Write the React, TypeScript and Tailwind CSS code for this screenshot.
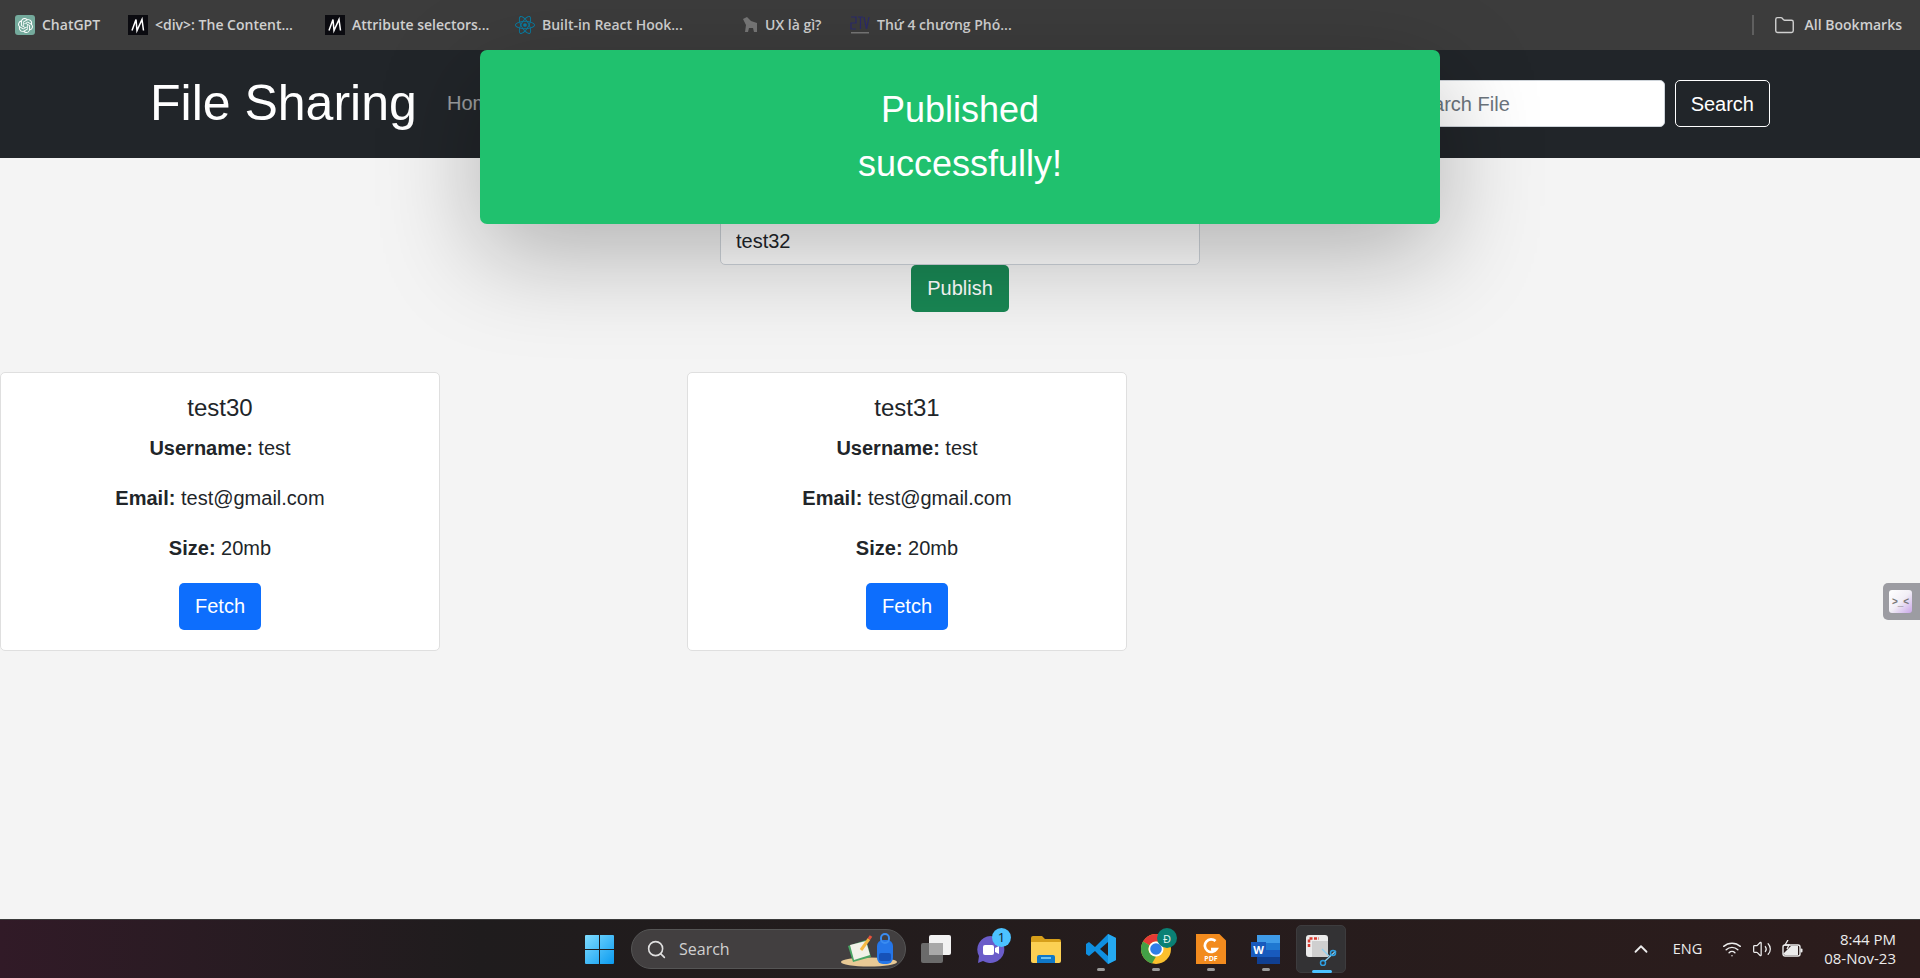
import { ChevronUp, Folder, Search, Volume2, Wifi } from 'lucide-react'
import { SiOpenai, SiReact } from 'react-icons/si'

function MdnIcon() {
  return (
    <svg viewBox="0 0 20 20" className="w-5 h-5 bg-[#0b0b10]">
      <path d="M4 15.5 L8 4.5 L9 15.5 L14 4.5 L15.5 15.5" stroke="#fff" strokeWidth="1.5" fill="none" />
    </svg>
  )
}

function Bookmark({ icon, label, width }: { icon: React.ReactNode; label: string; width: string }) {
  return (
    <div className={`flex items-center gap-[7px] ${width}`}>
      {icon}
      <span className="text-[14px] font-semibold text-[#d0d0d0] whitespace-nowrap pb-[2px]" style={{ fontFamily: '"Open Sans", sans-serif' }}>{label}</span>
    </div>
  )
}

function BookmarkBar() {
  return (
    <div className="h-[50px] bg-[#3c3c3c] flex items-center pl-[15px]">
      <Bookmark width="w-[113px]" label="ChatGPT" icon={<div className="w-5 h-5 rounded-[3px] bg-[#74aa9c] flex items-center justify-center"><SiOpenai className="text-white text-[15px]" /></div>} />
      <Bookmark width="w-[197px]" label="<div>: The Content..." icon={<MdnIcon />} />
      <Bookmark width="w-[190px]" label="Attribute selectors..." icon={<MdnIcon />} />
      <Bookmark width="w-[227px]" label="Built-in React Hook..." icon={<SiReact className="text-[#087ea4] text-[20px]" />} />
      <Bookmark width="w-[108px]" label="UX là gì?" icon={
        <svg viewBox="0 0 16 16" className="w-4 h-4">
          <path d="M1 2 L5 0 L9 4 L15 6 L15 15 L12 15 L11 11 L7 11 L6 15 L3 15 L4 8 Z" fill="#777" />
        </svg>
      } />
      <Bookmark width="w-[180px]" label="Thứ 4 chương Phó..." icon={
        <svg viewBox="0 0 20 20" className="w-5 h-5">
          <path d="M1 2 H6 V8 H1 V14 H6 M8 2 H13 M10.5 2 V14 M14 2 L16.5 14 L19 2" stroke="#2b2a6b" strokeWidth="1.2" fill="none" />
          <rect x="1" y="17" width="18" height="1.5" fill="#777" />
        </svg>
      } />
      <div className="ml-auto flex items-center pr-[18px]">
        <div className="w-[2px] h-[20px] bg-[#5f5f5f] mr-5"></div>
        <Folder size={21} strokeWidth={1.6} className="text-[#d0d0d0] mr-[10px]" />
        <span className="text-[14px] font-semibold text-[#d0d0d0] pb-[2px]" style={{ fontFamily: '"Open Sans", sans-serif' }}>All Bookmarks</span>
      </div>
    </div>
  )
}

function Navbar() {
  return (
    <nav className="h-[108px] bg-[#212529] flex items-start pt-[30px] pl-[150px] pr-[150px]">
      <span className="text-[50px] text-white leading-[47px] w-[297px]">File Sharing</span>
      <span className="text-[20px] leading-[47px] text-white/55">Home</span>
      <div className="ml-auto flex gap-[10px]">
        <input
          readOnly
          placeholder="Search File"
          className="w-[272px] h-[47px] rounded-[5px] border border-[#ced4da] bg-white px-[15px] pt-[2px] text-[20px] placeholder:text-[#6c757d]"
        />
        <button className="h-[47px] px-[15px] rounded-[5px] border border-white text-white text-[20px]">Search</button>
      </div>
    </nav>
  )
}

function FileCard({ name }: { name: string }) {
  return (
    <div className="w-[440px] h-[279px] bg-white border border-[#dfdfdf] rounded-[5px] pt-5 text-center text-[#212529]">
      <h4 className="text-[24px] leading-[29px] mb-[11px]">{name}</h4>
      <p className="text-[20px] leading-[30px] mb-5"><b>Username:</b> test</p>
      <p className="text-[20px] leading-[30px] mb-5"><b>Email:</b> test@gmail.com</p>
      <p className="text-[20px] leading-[30px] mb-5"><b>Size:</b> 20mb</p>
      <button className="h-[47px] px-[16px] pb-[2px] rounded-[5px] bg-[#0d6efd] text-white text-[20px]">Fetch</button>
    </div>
  )
}

function Taskbar() {
  return (
    <div className="h-[59px] bg-gradient-to-r from-[#311a27] via-[#1f1c1d] via-25% to-[#2c1c1c] border-t border-[#3a3a3a] flex items-center pl-[585px] shrink-0" style={{ fontFamily: '"Open Sans", sans-serif' }}>
      {/* Start */}
      <svg viewBox="0 0 29 29" className="w-[29px] h-[29px]">
        <defs>
          <linearGradient id="win" x1="0" y1="0" x2="1" y2="1">
            <stop offset="0" stopColor="#7fdcff" />
            <stop offset="1" stopColor="#0b9bf0" />
          </linearGradient>
        </defs>
        <path d="M1 0H14V14H0V1Q0 0 1 0ZM15 0H28Q29 0 29 1V14H15ZM0 15H14V29H1Q0 29 0 28ZM15 15H29V28Q29 29 28 29H15Z" fill="url(#win)" />
      </svg>

      {/* Search pill */}
      <div className="ml-[17px] w-[275px] h-[40px] rounded-full bg-[#423f40] border border-[#555] flex items-center pl-[14px] relative">
        <Search size={21} strokeWidth={1.8} className="text-[#e0e0e0]" />
        <span className="ml-[12px] text-[16px] text-[#d0d0d0]">Search</span>
        <svg viewBox="0 0 56 36" className="w-[56px] h-[36px] absolute right-[8px] top-[1px]">
          <ellipse cx="28" cy="31" rx="28" ry="4.5" fill="#e8c995" />
          <path d="M7 15 L25 9 L30 26 L12 31 Z" fill="#4aa564" />
          <path d="M9 14 L25 10 L29 24 L13 29 Z" fill="#f1f1e8" />
          <path d="M20 19 L28 8" stroke="#f5b942" strokeWidth="3" />
          <path d="M28 8 L30 5" stroke="#e8503a" strokeWidth="3" />
          <rect x="36" y="9" width="16" height="24" rx="6" fill="#2576e8" />
          <rect x="40" y="3" width="8" height="9" rx="4" fill="none" stroke="#3a8cf0" strokeWidth="2" />
          <rect x="38" y="22" width="12" height="8" rx="2" fill="#1652b8" />
        </svg>
      </div>

      {/* Task view */}
      <svg viewBox="0 0 30 28" className="w-[30px] h-[28px] ml-[15px]">
        <rect x="0" y="8" width="22" height="20" rx="2" fill="#6b6b6b" />
        <rect x="8" y="0" width="22" height="20" rx="2" fill="#f2f2f2" />
        <rect x="8" y="8" width="14" height="12" fill="#a9a9a9" />
      </svg>

      {/* Teams chat */}
      <div className="relative ml-[25px] w-[29px] h-[29px]">
        <svg viewBox="0 0 29 29" className="w-[29px] h-[29px]">
          <path d="M14.5 1 A14 13.5 0 1 1 7 26 L2 28 L3 21 A14 13.5 0 0 1 14.5 1Z" fill="#6a5cc9" />
          <rect x="7" y="10" width="11" height="10" rx="2" fill="#fff" />
          <path d="M19 13 L23 11 V19 L19 17 Z" fill="#fff" />
        </svg>
        <div className="absolute -top-[7px] -right-[6px] w-[19px] h-[19px] rounded-full bg-[#4cc2ff] text-[#10202c] text-[13px] flex items-center justify-center leading-none">1</div>
      </div>

      {/* Explorer */}
      <svg viewBox="0 0 30 27" className="w-[30px] h-[27px] ml-[26px]">
        <path d="M0 2 Q0 0 2 0 H11 L14 3 H28 Q30 3 30 5 V8 H0 Z" fill="#d79f1a" />
        <path d="M0 6 H30 V25 Q30 27 28 27 H2 Q0 27 0 25 Z" fill="#fcd053" />
        <path d="M6 21 Q6 19 8 19 H22 Q24 19 24 21 V27 H6 Z" fill="#0f78c9" />
        <rect x="10" y="21" width="10" height="2" fill="#6fc2ef" />
      </svg>

      {/* VS Code */}
      <div className="relative ml-[25px] w-[30px] h-[30px]">
        <svg viewBox="0 0 30 30" className="w-[30px] h-[30px]">
          <path d="M22 0 L30 4 V26 L22 30 L9 17 L3 22 L0 20 V10 L3 8 L9 13 Z M22 8 L14 15 L22 22 Z" fill="#0f8fe0" fillRule="evenodd" />
          <path d="M22 0 L30 4 V26 L22 30 Z" fill="#25a9f0" />
        </svg>
        <div className="absolute -bottom-[7px] left-[11px] w-[8px] h-[3px] rounded-full bg-[#9a9a9a]"></div>
      </div>

      {/* Chrome */}
      <div className="relative ml-[25px] w-[30px] h-[30px]">
        <svg viewBox="0 0 30 30" className="w-[30px] h-[30px]">
          <circle cx="15" cy="15" r="15" fill="#fbc02d" />
          <path d="M15 0 A15 15 0 0 1 28 7.5 H15 A7.5 7.5 0 0 0 8.5 11.2 L2 7.5 A15 15 0 0 1 15 0Z" fill="#e53935" />
          <path d="M2 7.5 L8.5 11.2 A7.5 7.5 0 0 0 15 22.5 L11 29.5 A15 15 0 0 1 2 7.5Z" fill="#43a047" />
          <circle cx="15" cy="15" r="7.5" fill="#fff" />
          <circle cx="15" cy="15" r="5.8" fill="#2f7ee8" />
        </svg>
        <div className="absolute -top-[6px] -right-[6px] w-[20px] h-[20px] rounded-full bg-[#0a8074] text-[#e6f5f2] text-[11px] flex items-center justify-center leading-none">Đ</div>
        <div className="absolute -bottom-[7px] left-[11px] w-[8px] h-[3px] rounded-full bg-[#9a9a9a]"></div>
      </div>

      {/* Foxit PDF */}
      <div className="relative ml-[25px] w-[30px] h-[30px] bg-[#f28b1e] flex flex-col items-center justify-end pb-[1px]" style={{ clipPath: 'polygon(0 0, 78% 0, 100% 22%, 100% 100%, 0 100%)' }}>
        <svg viewBox="0 0 20 18" className="w-[18px] h-[17px]">
          <path d="M15 3 A7 7 0 1 0 16 12 H10" stroke="#fff" strokeWidth="3" fill="none" />
        </svg>
        <span className="text-[7px] font-bold leading-[8px] text-white">PDF</span>
      </div>
      <div className="relative w-0 h-[30px]">
        <div className="absolute -bottom-[7px] -left-[19px] w-[8px] h-[3px] rounded-full bg-[#9a9a9a]"></div>
      </div>

      {/* Word */}
      <div className="relative ml-[25px] w-[29px] h-[29px]">
        <svg viewBox="0 0 29 29" className="w-[29px] h-[29px]">
          <rect x="6" y="0" width="23" height="8" fill="#3f9be8" />
          <rect x="6" y="8" width="23" height="7" fill="#1f78d1" />
          <rect x="6" y="15" width="23" height="7" fill="#185abd" />
          <rect x="6" y="22" width="23" height="7" fill="#103f91" />
        </svg>
        <div className="absolute left-0 top-[7px] w-[15px] h-[15px] bg-[#185abd] text-white text-[11px] font-bold flex items-center justify-center leading-none">W</div>
        <div className="absolute -bottom-[7px] left-[11px] w-[8px] h-[3px] rounded-full bg-[#9a9a9a]"></div>
      </div>

      {/* Snipping tool, active */}
      <div className="relative ml-[16px] w-[50px] h-[48px] rounded-[5px] bg-[#333234] border border-[#3d3c3e] flex items-start justify-start pt-[9px] pl-[9px]">
        <svg viewBox="0 0 31 31" className="w-[31px] h-[31px]">
          <rect x="0" y="0" width="22" height="22" rx="3" fill="#ececec" />
          <rect x="6" y="6" width="16" height="16" fill="#cfcfcf" />
          <path d="M3 12 V3.5 H13" stroke="#d63a2f" strokeWidth="2.5" strokeDasharray="3 1.5" fill="none" />
          <path d="M16 14 L24 22 M30 16 L19 26" stroke="#8fd0f0" strokeWidth="1.3" />
          <circle cx="27" cy="18" r="2.5" fill="none" stroke="#2f9fe0" strokeWidth="1.5" />
          <circle cx="17" cy="28" r="2.5" fill="none" stroke="#2f9fe0" strokeWidth="1.5" />
        </svg>
        <div className="absolute bottom-[-1px] left-[15px] w-[20px] h-[3px] rounded-full bg-[#4cc2ff]"></div>
      </div>

      {/* Tray */}
      <div className="ml-auto flex items-center pr-[24px] text-[#ececec]">
        <ChevronUp size={22} strokeWidth={2} className="mr-[21px]" />
        <span className="text-[14.5px] mr-[20px]">ENG</span>
        <Wifi size={20} strokeWidth={1.7} className="mr-[10px]" />
        <Volume2 size={20} strokeWidth={1.5} className="mr-[10px]" />
        <svg viewBox="0 0 21 18" className="w-[21px] h-[18px] mr-[21px]">
          <rect x="1" y="5" width="17" height="11" rx="2" fill="none" stroke="#ececec" strokeWidth="1.4" />
          <rect x="18.5" y="8.5" width="2" height="4" rx="1" fill="#ececec" />
          <path d="M1 14 L9 6 H16 V15 H3 Z" fill="#ececec" />
          <path d="M6 0 L3 5 H7 L5 9" stroke="#ececec" strokeWidth="1.3" fill="none" />
        </svg>
        <div className="text-right text-[15px] leading-[19px]">
          <div>8:44 PM</div>
          <div>08-Nov-23</div>
        </div>
      </div>
    </div>
  )
}

export default function App() {
  return (
    <div className="h-screen flex flex-col relative overflow-hidden bg-[#f4f4f4]" style={{ fontFamily: '"Liberation Sans", Arial, sans-serif' }}>
      <BookmarkBar />
      <Navbar />

      {/* Page */}
      <main className="flex-1 pt-[60px]">
        <div className="flex flex-col items-center">
          <input readOnly value="test32" className="w-[480px] h-[47px] rounded-[5px] border border-[#ced4da] bg-white px-[15px] text-[20px] text-[#212529]" />
          <button className="h-[47px] w-[98px] pb-[2px] rounded-[5px] bg-[#198754] text-white text-[20px]">Publish</button>
        </div>
        <div className="flex gap-[247px] mt-[60px]">
          <FileCard name="test30" />
          <FileCard name="test31" />
        </div>
      </main>

      <Taskbar />

      {/* Success dialog */}
      <div className="absolute left-[480px] top-[50px] w-[960px] h-[174px] rounded-[7px] bg-[#20c16e] shadow-[0_30px_100px_rgba(0,0,0,0.28)] flex items-center justify-center text-center text-white text-[36px] leading-[54px]">
        <div>Published<br />successfully!</div>
      </div>

      {/* Side handle */}
      <div className="absolute right-0 top-[583px] w-[37px] h-[37px] rounded-l-[5px] bg-[#9c9ca2] pl-[6px] pt-[7px]">
        <div className="w-[23px] h-[23px] rounded-[3px] bg-gradient-to-br from-white via-[#f2eff6] to-[#c9a6e8] text-[#777] text-[10px] font-bold flex items-center justify-center leading-none">&gt;_&lt;</div>
      </div>
    </div>
  )
}
